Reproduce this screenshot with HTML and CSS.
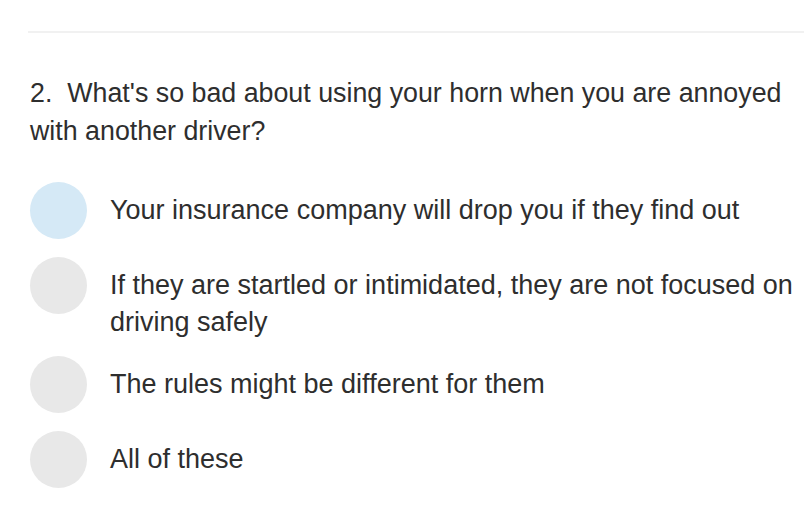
FILE: index.html
```html
<!DOCTYPE html>
<html>
<head>
<meta charset="utf-8">
<link rel="stylesheet" href="styles.css">
</head>
<body>
<div class="page">
  <div class="divider"></div>
  <div class="question">2.&nbsp; What's so bad about using your horn when you are annoyed with another driver?</div>
  <div class="options">
    <div class="option">
      <span class="radio radio-selected"></span>
      <span class="label">Your insurance company will drop you if they find out</span>
    </div>
    <div class="option">
      <span class="radio"></span>
      <span class="label">If they are startled or intimidated, they are not focused on driving safely</span>
    </div>
    <div class="option">
      <span class="radio"></span>
      <span class="label">The rules might be different for them</span>
    </div>
    <div class="option">
      <span class="radio"></span>
      <span class="label">All of these</span>
    </div>
  </div>
</div>
</body>
</html>
```

FILE: styles.css
```css
html, body {
  margin: 0;
  padding: 0;
  background: #ffffff;
}
body {
  font-family: "Liberation Sans", Arial, Helvetica, sans-serif;
  color: #2e2e2e;
  width: 804px;
  height: 516px;
  overflow: hidden;
}
.page {
  padding: 31px 0 0 30px;
}
.divider {
  height: 2px;
  background: #f1f1f1;
  margin-left: -2px;
}
.question {
  margin-top: 41px;
  font-size: 26.8px;
  line-height: 38px;
}
.options {
  margin-top: 32px;
  display: flex;
  flex-direction: column;
  gap: 15px;
}
.option {
  display: flex;
  align-items: flex-start;
  gap: 23px;
}
.radio {
  flex: 0 0 57px;
  width: 57px;
  height: 57px;
  border-radius: 50%;
  background: #e8e8e8;
  margin-bottom: 3px;
}
.radio-selected {
  background: #d5e9f6;
}
.label {
  padding-top: 10px;
  font-size: 27px;
  line-height: 37px;
}
```
